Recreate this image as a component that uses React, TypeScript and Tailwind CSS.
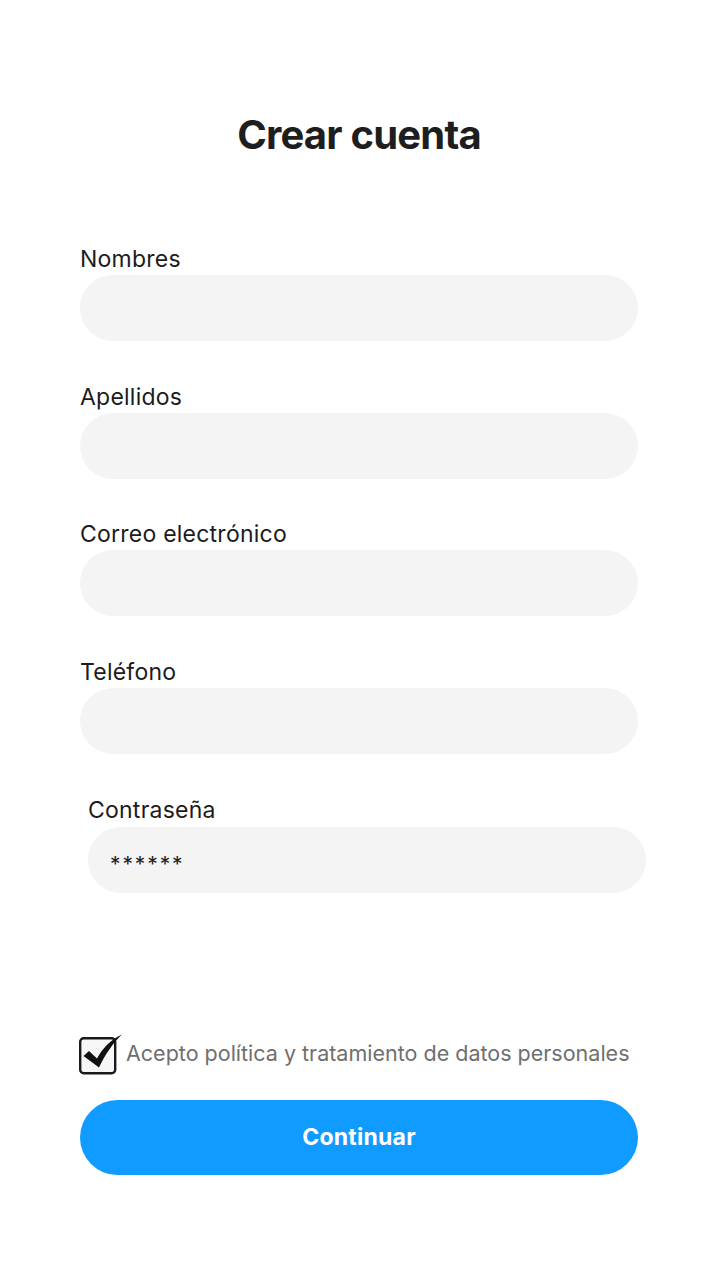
const FIELDS = [
  { label: "Nombres", value: "" },
  { label: "Apellidos", value: "" },
  { label: "Correo electrónico", value: "" },
  { label: "Teléfono", value: "" },
];

function Field({ label, value }: { label: string; value: string }) {
  return (
    <div className="flex flex-col">
      <label className="pt-[1px] text-[23px] leading-[28px] tracking-[0.01em] text-[#1c1c1c]">{label}</label>
      <div className="mt-[2px] flex h-[66px] items-center rounded-full bg-[#f4f4f4] px-[22px] text-[20px] text-[#222]">
        {value}
      </div>
    </div>
  );
}

function CheckIcon() {
  return (
    <svg width="46" height="46" viewBox="0 0 46 46" className="-ml-[4px] shrink-0">
      <rect x="4.2" y="7.2" width="35" height="35" rx="3.5" fill="#f7f7f7" stroke="#1a1a1a" strokeWidth="2.4" />
      <path d="M7.5 25 L13 20 L21 27.5 C27 16.5 35 8.5 46 3.5 C37 12 29.5 23 23 36.5 Z" fill="#111" />
    </svg>
  );
}

export default function App() {
  return (
    <div
      className="min-h-[1288px] w-full bg-white"
      style={{ fontFamily: "Inter, 'Noto Sans', sans-serif" }}
    >
      <div className="mx-auto w-[558px] pb-[113px]">
        <h1 className="pt-[111px] text-center text-[40px] font-bold leading-[48px] tracking-[-0.02em] text-[#1e1e1e]">
          Crear cuenta
        </h1>

        <div className="mt-[85px] flex flex-col gap-[40.5px]">
          {FIELDS.map((f) => (
            <Field key={f.label} {...f} />
          ))}
          <div className="-mr-[8px] ml-[8px] mt-[1px] flex flex-col">
            <label className="pt-[1px] text-[23px] leading-[28px] tracking-[0.01em] text-[#1c1c1c]">Contraseña</label>
            <div className="mt-[3px] flex h-[66px] items-center rounded-full bg-[#f4f4f4] px-[22px] pt-[9px] text-[21px] tracking-[0.09em] text-[#222]">
              ******
            </div>
          </div>
        </div>

        <div className="mt-[138px] flex items-center gap-[4px]">
          <CheckIcon />
          <span className="pb-[2px] text-[21.5px] leading-[28px] text-[#6f6f6f]">
            Acepto política y tratamiento de datos personales
          </span>
        </div>

        <button className="mt-[23px] flex h-[75px] w-full items-center justify-center rounded-full bg-[#0f9bff] text-[23px] font-bold tracking-[0.01em] text-white">
          Continuar
        </button>
      </div>
    </div>
  );
}
